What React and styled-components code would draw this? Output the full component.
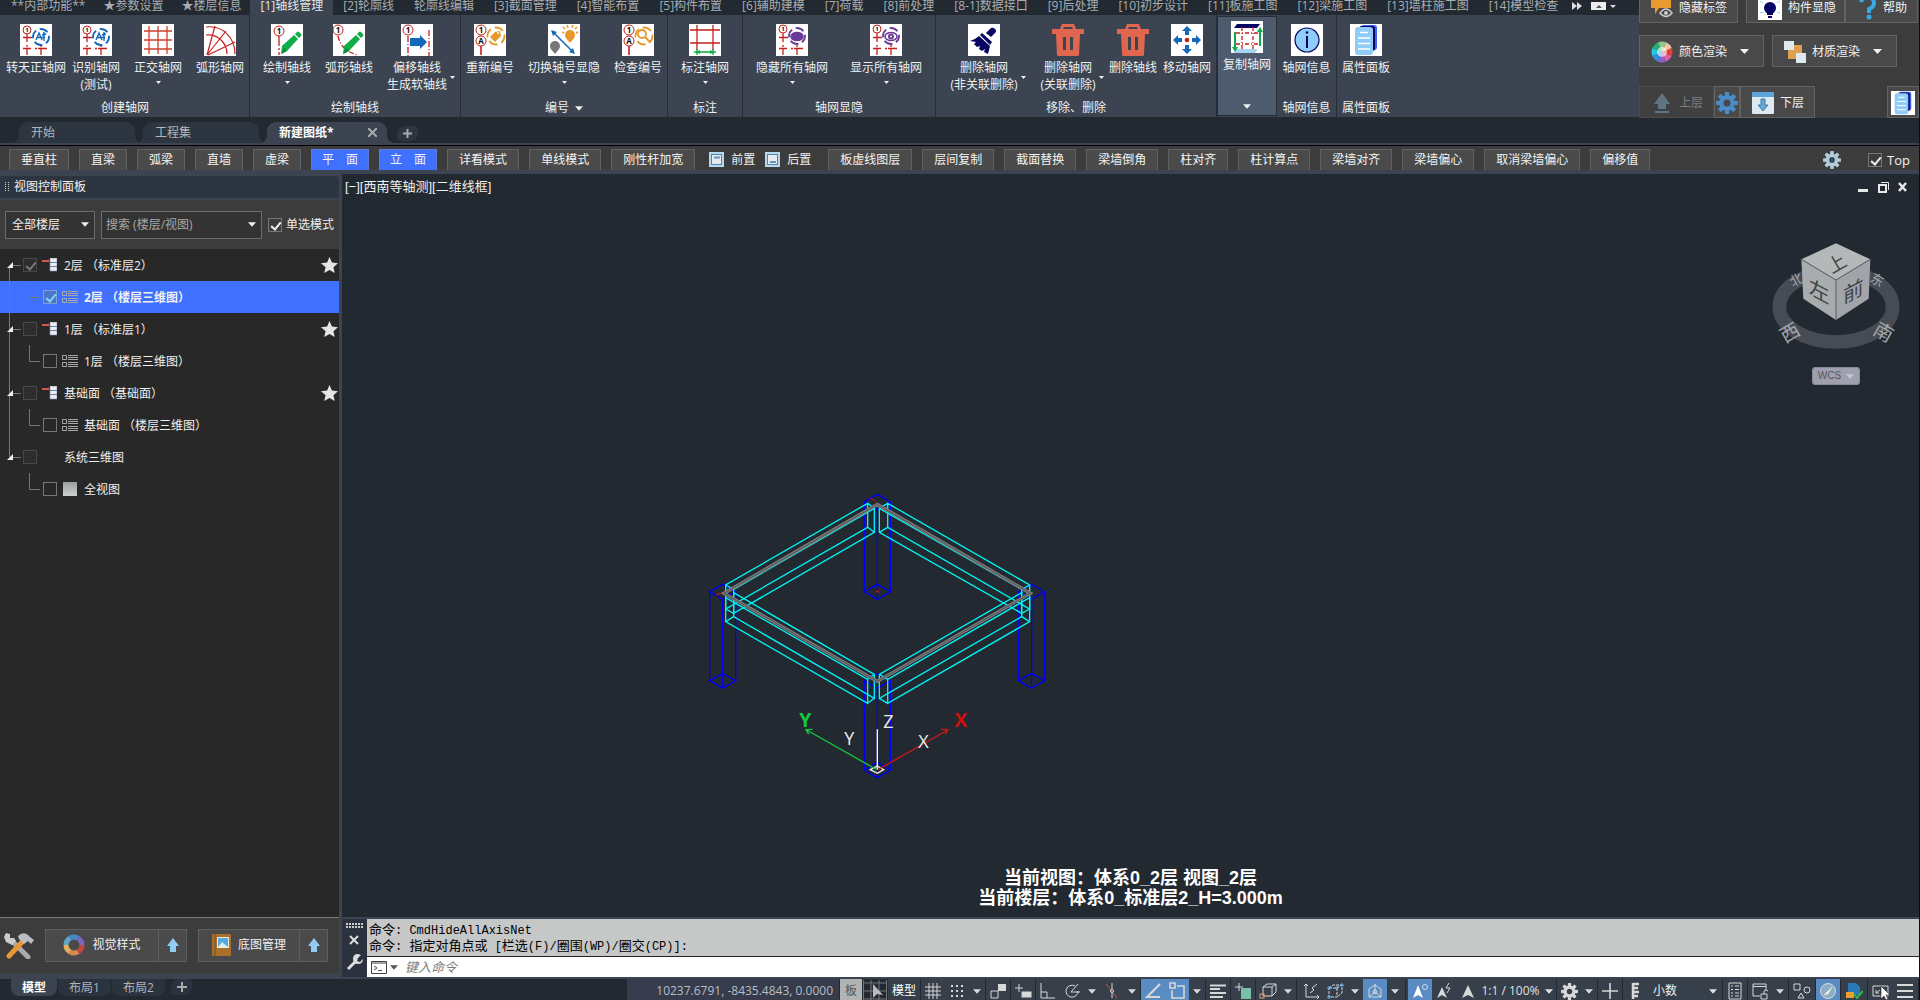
import React, { useState } from 'react';
import styled, { createGlobalStyle, css } from 'styled-components';

const BLUE = '#4070ff'
const RIBBON = '#3b4450'
const DARK = '#222931'
const GREY = '#3c3c3c'

const RED = '#c4201c'
const ORANGE = '#e8982a'
const AZURE = '#1468b8'
const PURPLE = '#6a3a98'
const GREEN = '#10ac48'
const NAVY = '#040462'

/* ---------- ribbon icons, 32 x 32 ---------- */

const Bubble = ({ x, y, r = 5, t = '1', size = 8 }) => (
    <g>
        <circle cx={x} cy={y} r={r} fill="#fff" stroke={RED} strokeWidth="1" />
        <text x={x} y={y + size * 0.36} fontSize={size} fontWeight="700" textAnchor="middle" fill="#111">{t}</text>
    </g>
)

const AxisCross = () => (
    <g stroke={RED} strokeWidth="1.3" fill="none">
        <path d="M7 9v9M3 13.5h9M7 21v2M7 25v6M3 24.5h8M15 24.5h2M18 24.5h9M21 21v2M21 25v6" />
    </g>
)

const Brackets = ({ cx, cy, r, color }) => (
    <circle cx={cx} cy={cy} r={r} fill="none" stroke={color} strokeWidth="1.8"
        strokeDasharray={`${r * 1.1} ${r * 0.47}`} strokeDashoffset={r * 0.2} />
)

const TakeAxis = () => (
    <g>
        <AxisCross />
        <Bubble x={7} y={6} r={4} size={6} />
        <Brackets cx={21} cy={13} r={8} color={AZURE} />
        <path d="M16 16l3-7 3 7M17 13.5h8M24 8v9M22 11l4-1" stroke={AZURE} strokeWidth="1.4" fill="none" />
    </g>
)

const HideAxis = ({ open }) => (
    <g>
        <AxisCross />
        <Bubble x={7} y={5} r={4} size={6} />
        <Brackets cx={21} cy={12} r={8} color={PURPLE} />
        <ellipse cx="21" cy="12.5" rx="6" ry="4" fill={open ? '#fff' : PURPLE} stroke={PURPLE} strokeWidth="1.5" />
        {open && <circle cx="21" cy="12.5" r="2" fill="#fff" stroke={PURPLE} strokeWidth="2" />}
    </g>
)

const GridAxis = () => (
    <path d="M7 2v28M16 2v28M25 2v28M2 7h28M2 16h28M2 25h28" stroke="#d0422c" strokeWidth="1.3" />
)

const ArcAxis = () => (
    <g fill="none" stroke={RED} strokeWidth="1.2">
        <path d="M2 3C18 1 31 13 31 30M2 11C14 10 23 19 23 30M3 31L11 2M3 31L22 7M4 31L31 18" />
    </g>
)

const Pencil = () => (
    <g>
        <path d="M11 22l12-11 4 4-11 12-6 3z" fill={GREEN} />
        <path d="M24 10l2-2q1-1 2 0l2 2q1 1 0 2l-2 2z" fill={GREEN} />
        <path d="M13 24l3 3-6 3z" fill="#0a8a38" />
    </g>
)

const DrawAxis = () => (
    <g>
        <path d="M8 12v10M8 24v2M8 28v3" stroke={RED} strokeWidth="1.3" />
        <Bubble x={8} y={7} r={5} />
        <Pencil />
    </g>
)

const DrawArc = () => (
    <g>
        <path d="M5 12q3 15 20 19" fill="none" stroke={RED} strokeWidth="1.3" strokeDasharray="5 2 1 2" />
        <Bubble x={5} y={6} r={5} />
        <Pencil />
    </g>
)

const OffsetAxis = () => (
    <g>
        <path d="M7 12v20M28 6v26" stroke={RED} strokeWidth="1.3" strokeDasharray="6 2 1 2" />
        <Bubble x={7} y={6} r={5} />
        <path d="M9 14h10v-3l7 7-7 7v-3H9z" fill={AZURE} />
    </g>
)

const Renumber = ({ search }) => (
    <g>
        <path d="M7 22v9" stroke={RED} strokeWidth="1.6" />
        <Bubble x={7} y={6} r={5} />
        <Bubble x={7} y={17} r={5} t="A" />
        <Brackets cx={22} cy={12} r={8.5} color={ORANGE} />
        {search
            ? <g fill="none" stroke={ORANGE} strokeWidth="1.8"><circle cx="20" cy="10" r="4" /><path d="M23 13l5 5" /></g>
            : <g><path d="M16 13l5-5 5-1 1 5-6 6z" fill={ORANGE} /><circle cx="24" cy="9" r="1" fill="#fff" /></g>}
    </g>
)

const ToggleNumber = () => (
    <g>
        <path d="M5 8l20 20" stroke={AZURE} strokeWidth="1.6" />
        <path d="M3 6l6 2-4 4zM27 30l-6-2 4-4z" fill={AZURE} />
        <circle cx="22" cy="11" r="5" fill={ORANGE} />
        <path d="M18 14h8l-4 5z" fill={ORANGE} />
        <path d="M14 8l2 1M15 3l2 2M19 1l1 3M25 1l-1 3M29 3l-2 2M30 8l-2 1" stroke={ORANGE} strokeWidth="1.5" />
        <circle cx="7" cy="22" r="5" fill="#777" />
        <path d="M3 25h8l-4 5z" fill="#777" />
    </g>
)

const MarkAxis = () => (
    <g>
        <path d="M8 1v25M24 1v25M1 6h30M1 19h30" stroke={RED} strokeWidth="1.3" />
        <path d="M5 28h22M8 25v6M24 25v6" stroke={GREEN} strokeWidth="1.4" />
        <path d="M7 28l4-2v4zM25 28l-4-2v4z" fill={GREEN} />
    </g>
)

const Broom = () => (
    <g fill={NAVY}>
        <path d="M18 9l5-5q2-1 4 1t0 4l-4 4z" />
        <path d="M14 9l10 9-2 3L12 11z" />
        <path d="M11 12l11 10-2 8-4-2 1-3-3 2-3-2 1-3-3 1-3-3 2-2-6-1q6-2 9-5z" />
    </g>
)

const Trash = () => (
    <g fill="#e06650">
        <path d="M10 0h12l2 5h8v5H0V5h8zM12 3l-1 2h10l-1-2z" fillRule="evenodd" />
        <path d="M4 10h24l-1 21q0 1-2 1H7q-2 0-2-1zM11 13v13h3V13zM18 13v13h3V13z" fillRule="evenodd" />
    </g>
)

const MoveAxis = () => (
    <g fill={AZURE}>
        <path d="M16 2l5 5h-3v4h-4V7h-3zM16 30l5-5h-3v-4h-4v4h-3zM2 16l5-5v3h4v4H7v3zM30 16l-5-5v3h-4v4h4v3z" />
        <circle cx="16" cy="16" r="2.3" fill={RED} />
    </g>
)

const CopyAxis = () => (
    <g>
        <path d="M6 3h23l-3 4H3z" fill={NAVY} />
        <path d="M6 28h21l-3 4H2z" fill="#a8d4f4" />
        <path d="M11 6v22M22 6v22M5 12h22M5 23h22" stroke={RED} strokeWidth="1.3" strokeDasharray="4 2 1 2" />
        <path d="M3 11h2v15h2l-3 5-3-5h2zM28 25h2V11h2l-3-5-3 5h2z" fill={GREEN} />
    </g>
)

const Info = () => (
    <g>
        <circle cx="16" cy="16" r="12" fill="#90ccf8" stroke={NAVY} strokeWidth="1.2" />
        <path d="M16 12v12" stroke={NAVY} strokeWidth="2" />
        <circle cx="16" cy="8.5" r="1.3" fill={NAVY} />
    </g>
)

const Sheets = () => (
    <g>
        <path d="M12 1h12q3 0 3 3v19q0 3-3 3h-2z" fill="#3c60f0" />
        <path d="M10 2h12q3 0 3 3v19q0 3-3 3z" fill={NAVY} />
        <rect x="5" y="3" width="18" height="28" rx="3" fill="#90ccf8" />
        <path d="M10 8.5h8M8 14h12M8 19.5h12M8 25h12" stroke="#fff" strokeWidth="1.3" />
    </g>
)

const Down = ({ w = 9 }) => (
    <svg width={w} height={5} viewBox="0 0 9 5"><path d="M0 0h9L4.500 5z" fill="currentColor" /></svg>
)

/* ---------- data ---------- */

const ribbonTabs = [
    '**内部功能**', '★参数设置', '★楼层信息', '[1]轴线管理', '[2]轮廓线', '轮廓线编辑', '[3]截面管理', '[4]智能布置',
    '[5]构件布置', '[6]辅助建模', '[7]荷载', '[8]前处理', '[8-1]数据接口', '[9]后处理', '[10]初步设计', '[11]板施工图',
    '[12]梁施工图', '[13]墙柱施工图', '[14]模型检查',
]

const ribbonGroups = [
    {
        title: '创建轴网',
        items: [
            { label: ['转天正轴网'], icon: <TakeAxis />, w: 66 },
            { label: ['识别轴网', '(测试)'], icon: <TakeAxis />, w: 54 },
            { label: ['正交轴网'], icon: <GridAxis />, w: 70, drop: 'under' },
            { label: ['弧形轴网'], icon: <ArcAxis />, w: 54 },
        ],
    },
    {
        title: '绘制轴线',
        items: [
            { label: ['绘制轴线'], icon: <DrawAxis />, w: 70, drop: 'under' },
            { label: ['弧形轴线'], icon: <DrawArc />, w: 54 },
            { label: ['偏移轴线', '生成软轴线'], icon: <OffsetAxis />, w: 82, drop: 'side' },
        ],
    },
    {
        title: '编号',
        more: true,
        items: [
            { label: ['重新编号'], icon: <Renumber />, w: 54 },
            { label: ['切换轴号显隐'], icon: <ToggleNumber />, w: 94, drop: 'under' },
            { label: ['检查编号'], icon: <Renumber search />, w: 54 },
        ],
    },
    { title: '标注', items: [{ label: ['标注轴网'], icon: <MarkAxis />, w: 70, drop: 'under' }] },
    {
        title: '轴网显隐',
        items: [
            { label: ['隐藏所有轴网'], icon: <HideAxis />, w: 94, drop: 'under' },
            { label: ['显示所有轴网'], icon: <HideAxis open />, w: 94, drop: 'under' },
        ],
    },
    {
        title: '移除、删除',
        items: [
            { label: ['删除轴网', '(非关联删除)'], icon: <Broom />, w: 92, drop: 'side' },
            { label: ['删除轴网', '(关联删除)'], icon: <Trash />, w: 76, drop: 'side', bare: true },
            { label: ['删除轴线'], icon: <Trash />, w: 54, bare: true },
            { label: ['移动轴网'], icon: <MoveAxis />, w: 54 },
        ],
    },
    { active: true, items: [{ label: ['复制轴网'], icon: <CopyAxis />, w: 54 }] },
    { title: '轴网信息', items: [{ label: ['轴网信息'], icon: <Info />, w: 55 }] },
    { title: '属性面板', last: true, items: [{ label: ['属性面板'], icon: <Sheets />, w: 54 }] },
]

const toolsLeft = ['垂直柱', '直梁', '弧梁', '直墙', '虚梁', '平\u3000面', '立\u3000面', '详看模式', '单线模式', '刚性杆加宽']
const toolsRight = ['板虚线图层', '层间复制', '截面替换', '梁墙倒角', '柱对齐', '柱计算点', '梁墙对齐', '梁墙偏心', '取消梁墙偏心', '偏移值']

const floors = [
    { name: '2层 （标准层2）', child: '2层 （楼层三维图）', star: true, checked: true },
    { name: '1层 （标准层1）', child: '1层 （楼层三维图）', star: true },
    { name: '基础面 （基础面）', child: '基础面 （楼层三维图）', star: true },
    { name: '系统三维图', child: '全视图' },
]

const history = [
    '命令: CmdHideAllAxisNet',
    '命令: 指定对角点或 [栏选(F)/圈围(WP)/圈交(CP)]:',
]

/* ---------- pieces ---------- */

const RibbonItem = ({ item, raised }) => (
    <BigButton $w={item.w} $raised={raised}>
        <svg width="32" height="32" viewBox="0 0 32 32">
            {!item.bare && <rect width="32" height="32" fill="#fff" />}
            {item.icon}
        </svg>
        <BigLabel>
            {item.label.map(line => <span key={line}>{line}</span>)}
            {item.drop === 'side' && <SideArrow><Down w={5} /></SideArrow>}
        </BigLabel>
        {item.drop === 'under' && <Down w={5} />}
    </BigButton>
)

const Ribbon = () => (
    <RibbonBody>
        {ribbonGroups.map((g, i) => (
            <Group key={i} $active={g.active} $last={g.last}>
                <GroupItems>
                    {g.items.map(item => <RibbonItem key={item.label.join()} item={item} raised={g.active} />)}
                </GroupItems>
                <GroupTitle>{g.title}{(g.more || g.active) && <Down w={8} />}</GroupTitle>
            </Group>
        ))}
    </RibbonBody>
)

const Gear = ({ size, color, hole }) => (
    <svg width={size} height={size} viewBox="0 0 20 20">
        <g fill={color}>
            {[0, 45, 90, 135].map(a => <rect key={a} x="8" y="0" width="4" height="20" rx="1" transform={`rotate(${a} 10 10)`} />)}
            <circle cx="10" cy="10" r="7" />
        </g>
        <circle cx="10" cy="10" r="3.2" fill={hole} />
    </svg>
)

const RightPanel = () => (
    <SidePanel>
        <SideRow>
            <PanelButton $w={99}>
                <svg width="22" height="24" viewBox="0 0 22 24">
                    <path d="M0 0h20v12H8l-4 6v-6H0z" fill="#e89a30" />
                    <path d="M9 17q6-8 12 0-6 7-12 0z" fill="#484848" stroke="#ccc" strokeWidth="1.5" />
                    <circle cx="15" cy="17" r="2" fill="#ccc" />
                </svg>
                隐藏标签
            </PanelButton>
            <Spacer />
            <PanelButton $w={99}>
                <svg width="24" height="24" viewBox="0 0 24 24">
                    <rect width="24" height="24" fill="#fff" />
                    <circle cx="12" cy="12" r="6" fill={NAVY} />
                    <path d="M9 17h6v2H9zM10 20h4v2h-4z" fill={NAVY} />
                    <path d="M2 5l3 2M22 5l-3 2M2 17l3-1M22 17l-3-1" stroke="#8cc8f0" />
                </svg>
                构件显隐
            </PanelButton>
            <PanelButton $w={73}>
                <svg width="20" height="24" viewBox="0 0 20 24">
                    <path d="M4 6q1-5 7-5 6 1 6 6 0 4-5 6v4" fill="none" stroke="#38a8e8" strokeWidth="4" />
                    <circle cx="12" cy="21" r="2.5" fill="#38a8e8" />
                </svg>
                帮助
            </PanelButton>
        </SideRow>
        <SideRow>
            <PanelButton $w={125}>
                <ColorWheel />
                颜色渲染
                <Down />
            </PanelButton>
            <Spacer />
            <PanelButton $w={125}>
                <svg width="22" height="22" viewBox="0 0 22 22">
                    <rect x="4" y="4" width="14" height="14" fill="#e0a050" />
                    <rect x="0" y="0" width="10" height="9" fill="#dfe8ee" />
                    <rect x="12" y="12" width="10" height="10" fill="#dfe8ee" />
                </svg>
                材质渲染
                <Down />
            </PanelButton>
        </SideRow>
        <SideRow $last>
            <PanelButton $w={75} disabled>
                <svg width="22" height="24" viewBox="0 0 22 24"><path d="M11 2l8 11h-4v5H7v-5H3zM4 20h14v2H4z" fill="#5f7584" /></svg>
                上层
            </PanelButton>
            <PanelButton $w={26} $tight aria-label="设置"><Gear size={22} color="#4a8cc8" hole="#484848" /></PanelButton>
            <PanelButton $w={75}>
                <svg width="22" height="22" viewBox="0 0 22 22">
                    <rect width="22" height="22" rx="1" fill="#dfe9f0" />
                    <rect width="22" height="5" fill="#5aa4dc" />
                    <path d="M9 7h4v6h3l-5 6-5-6h3z" fill="#6aa8d4" stroke="#3c7cac" />
                </svg>
                下层
            </PanelButton>
            <Fill />
            <PanelButton $w={32} $tight aria-label="属性面板">
                <svg width="24" height="24" viewBox="0 0 32 32"><rect width="32" height="32" fill="#fff" /><Sheets /></svg>
            </PanelButton>
        </SideRow>
    </SidePanel>
)

const ColorWheel = () => (
    <svg width="22" height="22" viewBox="-11 -11 22 22">
        {['#e83c30', '#e060a0', '#9060d0', '#3090e0', '#20c8e0', '#20b070', '#90c890', '#f0c8a0'].map((c, i) => (
            <path key={c} d="M0 0L10.500 0A10.500 10.500 0 0 1 7.400 7.400z" fill={c} transform={`rotate(${i * 45 - 22})`} />
        ))}
        <circle r="5" fill="#fff" opacity=".6" />
    </svg>
)

const WindowIcon = ({ low }) => (
    <svg width="15" height="15" viewBox="0 0 15 15">
        <rect width="15" height="15" fill="#b8d8ec" />
        <rect x="2.5" y="2.5" width="10" height="10" fill="#e8eaf0" stroke="#4c88b4" />
        <path d={low ? 'M5 10h6' : 'M5 5.5h6'} stroke="#5c98c4" strokeWidth="2" />
    </svg>
)

const Toolbar = () => (
    <ToolRow>
        {toolsLeft.map((t, i) => <ToolButton key={t} $on={i === 5 || i === 6}>{t}</ToolButton>)}
        <OrderButtons>
            <FlatButton><WindowIcon />前置</FlatButton>
            <FlatButton><WindowIcon low />后置</FlatButton>
        </OrderButtons>
        {toolsRight.map(t => <ToolButton key={t}>{t}</ToolButton>)}
        <Fill />
        <FlatButton aria-label="选项"><Gear size={18} color="#b4cbdc" hole="#3c4c5a" /></FlatButton>
        <TopCheck><CheckBox type="checkbox" defaultChecked />Top</TopCheck>
    </ToolRow>
)

const FloorIcon = () => (
    <svg width="15" height="14" viewBox="0 0 15 14">
        <path d="M0 3h7" stroke="#d85848" strokeWidth="2" />
        <rect x="8" y="0" width="7" height="13" fill="#e8ecf4" stroke="#8890b8" strokeWidth=".6" />
        <path d="M8 4.500h7M8 8.500h7" stroke="#7a80a0" />
    </svg>
)

const ListIcon = () => (
    <svg width="16" height="12" viewBox="0 0 16 12" fill="none" stroke="#a8a8a8">
        <path d="M.5.5h4v4h-4zM.5 7.500h4v4h-4zM6 .5h10M6 2.500h10M6 4.500h10M6 7.500h10M6 9.500h10M6 11.500h10" />
    </svg>
)

const FloorTree = () => {
    const [active, setActive] = useState(0)
    return (
        <Tree>
            {floors.map((f, i) => (
                <React.Fragment key={f.name}>
                    <TreeRow $kind="parent" $first={i === 0} $last={i === floors.length - 1}>
                        <Twist width="14" height="7" viewBox="0 0 14 7"><path d="M0 6L6 0v6z" fill="#eee" /><path d="M6 3.500h8" stroke="#777" /></Twist>
                        <CheckBox type="checkbox" $dim defaultChecked={f.checked} aria-label={f.name} />
                        <IconSlot>{f.star && <FloorIcon />}</IconSlot>
                        <TreeText>{f.name}</TreeText>
                        <Fill />
                        {f.star && (
                            <svg width="17" height="16" viewBox="0 0 17 16">
                                <path d="M8.500 0l2.400 5.600 6.100.6-4.600 4 1.400 5.800-5.300-3.100L3.200 16l1.400-5.800L0 6.200l6.100-.6z" fill="#e6e6e6" />
                            </svg>
                        )}
                    </TreeRow>
                    <TreeRow $kind="child" $on={active === i} $end={i === floors.length - 1} onClick={() => setActive(i)}>
                        <Branch width="11" height="17" viewBox="0 0 11 17"><path d="M.5 0v16.500H11" fill="none" stroke="#777" /></Branch>
                        <CheckBox type="checkbox" $sel={active === i} checked={active === i} readOnly aria-label={f.child} />
                        <IconSlot>{f.star ? <ListIcon /> : <ViewSwatch />}</IconSlot>
                        <TreeText>{f.child}</TreeText>
                    </TreeRow>
                </React.Fragment>
            ))}
        </Tree>
    )
}

const UpArrow = () => (
    <svg width="12" height="14" viewBox="0 0 12 14"><path d="M6 0l6 8H9v6H3V8H0z" fill="#90ccf4" /></svg>
)

const FloorPanel = () => (
    <LeftPanel>
        <PanelTitle>
            <svg width="4" height="10" viewBox="0 0 4 10"><path d="M.5 0v10M3.500 0v10" stroke="#ccc" strokeDasharray="1 1" /></svg>
            视图控制面板
        </PanelTitle>
        <Filters>
            <SelectBox $w={90}>
                <select aria-label="楼层"><option>全部楼层</option></select>
                <Down w={8} />
            </SelectBox>
            <SelectBox $grow>
                <input aria-label="搜索" placeholder="搜索 (楼层/视图)" />
                <Down w={8} />
            </SelectBox>
            <CheckLabel><CheckBox type="checkbox" defaultChecked />单选模式</CheckLabel>
        </Filters>
        <FloorTree />
        <PanelFoot>
            <FlatButton aria-label="工具">
                <svg width="30" height="28" viewBox="0 0 30 28">
                    <path d="M9 11l15 15" stroke="#aaa" strokeWidth="5" strokeLinecap="round" />
                    <path d="M2 2l4 1v4h4l2 3-4 4-6-3-2-5z" fill="#ccc" />
                    <path d="M20 9L5 25" stroke="#e89838" strokeWidth="5" strokeLinecap="round" />
                    <path d="M14 5q6-6 12 1l4 3-3 4-3-3-4 3-5-5z" fill="#b8bec2" />
                </svg>
            </FlatButton>
            <SplitButton $w={142}>
                <button>
                    <svg width="22" height="22" viewBox="-11 -11 22 22" fill="none" strokeWidth="5">
                        {['#c84840', '#d88850', '#e0b060', '#60a8c8', '#4888d0', '#7868c0'].map((c, i) => (
                            <path key={c} d="M8 0A8 8 0 0 1 4 6.900" stroke={c} transform={`rotate(${i * 60})`} />
                        ))}
                    </svg>
                    视觉样式
                </button>
                <button aria-label="展开视觉样式"><UpArrow /></button>
            </SplitButton>
            <SplitButton $w={130}>
                <button>
                    <svg width="19" height="22" viewBox="0 0 19 22">
                        <rect width="19" height="22" rx="1" fill="#a8702c" />
                        <path d="M3 0v22" stroke="#7c5020" />
                        <rect x="5" y="3" width="12" height="11" fill="#e8ecdc" />
                        <path d="M6 4h10v9H6z" fill="#58a8d8" />
                        <path d="M6 13l4-5 6 5z" fill="#d8ecf4" />
                    </svg>
                    底图管理
                </button>
                <button aria-label="展开底图管理"><UpArrow /></button>
            </SplitButton>
        </PanelFoot>
    </LeftPanel>
)

const columns = [
    [562, 73, 343], [98, 343, 610], [1025, 343, 610], [562, 610, 878],
]

const Wireframe = () => (
    <Model width="370" height="320" viewBox="0 0 1110 960" fill="none" strokeWidth="4">
        <g stroke="#0000f8">
            {columns.map(([x, t, b]) => (
                <path key={x + '-' + t} d={`M${x} ${t}l39 22-39 23-39-23zM${x} ${b}l39 22-39 23-39-23zM${x - 39} ${t + 22}V${b + 22}M${x + 39} ${t + 22}V${b + 22}M${x} ${t + 45}V${b + 45}`} />
            ))}
        </g>
        <g stroke="#00f4f4">
            <path d="M533 100L107 345V417L533 172zM553 115L131 358V430L553 187zM533 100l20 15M533 172l20 15M107 345l24 13M107 417l24 13" />
            <path d="M593 100L1019 345V417L593 172zM568 115L995 358V430L568 187zM593 100l-25 15M593 172l-25 15M1019 345l-24 13M1019 417l-24 13" />
            <path d="M131 368L553 613V685L131 440zM107 383L533 628V700L107 455zM131 440l-24 15M553 613l-20 15M553 685l-20 15" />
            <path d="M995 368L568 613V685L995 440zM1019 383L593 628V700L1019 455zM995 440l24 15M568 613l25 15M568 685l25 15" />
        </g>
        <path d="M562 103L1021 370 562 634 102 370z" stroke="#7c7c7c" strokeWidth="10" />
        <path d="M562 103L1021 370 562 634 102 370z" stroke="#3a4046" strokeWidth="2" />
        <path d="M541 84l15 9M80 376l14-8M80 376l7-8M557 362l11 5M568 362l-11 5" stroke="#c01818" strokeWidth="3" />
        <path d="M541 899l21-11 19 11-19 11z" stroke="#eee" />
        <path d="M562 900V778" stroke="#fff" />
        <path d="M562 900L350 780M368 778l-20 1 8 14" stroke="#14c83c" />
        <path d="M562 900L773 780M753 778l20 1-7 14" stroke="#d01818" />
        <text x="346" y="771" textAnchor="middle" fontSize="58" fontWeight="700" fill="#14c83c">Y</text>
        <text x="813" y="771" textAnchor="middle" fontSize="58" fontWeight="700" fill="#d01010">X</text>
        <text x="478" y="824" textAnchor="middle" fontSize="54" fill="#eee">Y</text>
        <text x="595" y="773" textAnchor="middle" fontSize="54" fill="#eee">Z</text>
        <text x="700" y="834" textAnchor="middle" fontSize="54" fill="#eee">X</text>
    </Model>
)

const ViewCube = () => (
    <CubeBox>
        <svg width="130" height="110" viewBox="93 210 390 330">
            <ellipse cx="288" cy="410" rx="170" ry="106" fill="none" stroke="#464b54" strokeWidth="41" />
            <g fontSize="40" fill="#a4a8aa" textAnchor="middle">
                <text transform="translate(176 342) rotate(-30)">北</text>
                <text transform="translate(404 342) rotate(30)">东</text>
                <text transform="translate(160 506) rotate(-30)" fontSize="58">西</text>
                <text transform="translate(420 504) rotate(30)" fontSize="58">南</text>
            </g>
            <path d="M288 220L391 268 288 330 184 268z" fill="#b4b8b9" />
            <path d="M184 268L288 330V450L190 386z" fill="#a9acae" />
            <path d="M391 268L288 330V450L386 386z" fill="#a2a4aa" />
            <path d="M184 268L288 330 391 268M288 330V450" stroke="#585c5e" strokeWidth="3" fill="none" />
            <g fontSize="62" fill="#3f4645" textAnchor="middle">
                <text transform="translate(300 298) rotate(-30)" fontSize="56">上</text>
                <text transform="translate(237 386) skewY(28)">左</text>
                <text transform="translate(340 386) skewY(-28)">前</text>
            </g>
        </svg>
        <Wcs>WCS<Down w={8} /></Wcs>
    </CubeBox>
)

// hanzi run one size larger than the monospaced latin
const HistoryLine = ({ text }) => (
    <div>
        {text.split(/([\u4e00-\u9fff]+)/).map((part, i) => i % 2 ? <Han key={i}>{part}</Han> : part)}
    </div>
)

const CommandLine = () => (
    <Command>
        <CommandGutter>
            <svg width="18" height="56" viewBox="0 0 18 56" fill="none">
                <path d="M0 5h18M0 8h18" stroke="#ccc" strokeWidth="2" strokeDasharray="2 1" />
                <path d="M4 17l8 8M12 17l-8 8" stroke="#ddd" strokeWidth="2" />
                <path d="M2 50l8-8" stroke="#ddd" strokeWidth="3" />
                <path d="M15 36l-3 3-1 3 3 1 3-3q0 5-5 5t-5-5 5-5z" fill="#ddd" />
            </svg>
        </CommandGutter>
        <CommandBody>
            <History>
                {history.map(line => <HistoryLine key={line} text={line} />)}
            </History>
            <Prompt>
                <svg width="16" height="13" viewBox="0 0 16 13" fill="none" stroke="#444">
                    <path d="M.5.5h15v12H.5zM0 2h16M3 5l3 2-3 2M7 9.500h4" />
                </svg>
                <Down w={8} />
                <input aria-label="命令" placeholder="键入命令" />
            </Prompt>
        </CommandBody>
    </Command>
)

/* status bar glyphs on an 18px grid */
const status = {
    grid: <path d="M5 1v16M9 1v16M13 1v16M1 5h16M1 9h16M1 13h16" />,
    dots: <path d="M3 4h12M3 9h12M3 14h12" strokeWidth="2" strokeDasharray="2 3" />,
    snap: <><rect x="9" y="2" width="8" height="7" fill="#d8d8d8" stroke="none" /><path d="M9 9H2v7h7z" /></>,
    input: <><path d="M1 6h8M5 2v8" /><rect x="8" y="10" width="9" height="5" fill="#d8d8d8" /></>,
    ortho: <path d="M2 1v15h14M2 10h6v6" />,
    polar: <path d="M15 9a6 6 0 1 1-3-5M8 10h9M8 10l7-8" />,
    iso: <><path d="M3 2l11 14" stroke="#c85850" /><path d="M9 1v6M9 11v5" /><circle cx="9" cy="9" r="1.5" /></>,
    track: <path d="M16 2L3 15h13M9 9l1 1" strokeWidth="2" />,
    osnap: <path d="M4 8v8h12V4H9M2 1h5v5H2z" strokeWidth="1.6" />,
    weight: <path d="M1 3.500h16M1 7h10M1 11h16M1 15h13" strokeWidth="2" />,
    trans: <><path d="M1 5h8M5 1v8" /><rect x="7" y="6" width="10" height="11" fill="#78c0a8" stroke="none" /></>,
    solid: <><path d="M4 5h9v9H4zM4 5l4-3h9l-4 3M17 2v8l-4 4" /><rect x="1" y="12" width="4" height="4" stroke="#e0a070" /></>,
    ucs: <path d="M4 2v13h13M2 4l2-2 2 2M15 13l2 2-2 2M8 11l4-3-2-2 5-4" />,
    filter: <><path d="M3 6h8v9H3zM3 6l4-3h9v8l-5 4M11 6l4-3" strokeDasharray="3 1" /><path d="M2 5h2v2H2zM10 5h2v2h-2zM2 14h2v2H2zM15 2h2v2h-2z" stroke="#60b0e8" /></>,
    gizmo: <><path d="M9 2v8M9 10l-6 5M9 10l6 5M9 3L3 7v8M9 3l6 4v8M3 15h12" /><circle cx="9" cy="10" r="2" /></>,
    scaleA: <><path d="M7 3L2 16l5-3 5 3z" fill="#fff" stroke="none" /><circle cx="14" cy="5" r="2.5" /></>,
    scaleB: <><path d="M7 5L2 16l5-3 5 3z" fill="#d8d8d8" stroke="none" /><path d="M14 1l-3 5h4l-3 5" /></>,
    scaleC: <path d="M9 3L3 16l6-3 6 3z" fill="#d8d8d8" stroke="none" />,
    plus: <path d="M9 1v16M1 9h16" strokeWidth="1.6" />,
    ruler: <path d="M6 1v16M6 2h6M6 6h5M6 10h6M6 14h5" strokeWidth="2.5" />,
    props: <path d="M3 1h12v16H3zM5 4h2M9 4h4M5 7.500h2M9 7.500h4M5 11h2M9 11h4M5 14h2M9 14h4" />,
    lock: <><path d="M15 8V2H2v12h7M2 4.500h13" /><path d="M10 12h6v5h-6zM13 12V9q2-2 4 0" /></>,
    shapes: <><path d="M1 2h6v6H1zM8 11l-3 5h6z" /><circle cx="14" cy="8" r="3" /></>,
    perf: <><circle cx="9" cy="9" r="7.5" fill="#8ab0c8" /><path d="M5 13l8-8-4 7z" fill="#fff" /></>,
    trust: <><path d="M3 1h8l4 4v8H3z" fill="#2878b8" stroke="none" /><rect x="1" y="10" width="8" height="6" fill="#e8a030" stroke="none" /><path d="M9 12l3 4 6-7" stroke="#30b850" strokeWidth="2" /></>,
    clean: <><path d="M1 4h15v10H1zM4 11l4-3M4 8v3h3" /><path d="M9 4v13l3-3 2 4 2-1-2-4h4z" fill="#fff" stroke="#222" strokeWidth=".6" /></>,
    menu: <path d="M1 3h16M1 9h16M1 15h16" strokeWidth="2" />,
}

const St = ({ n, on }) => (
    <StatusButton $on={on} aria-label={n}>
        <svg width="18" height="18" viewBox="0 0 18 18" fill="none" stroke="#d8d8d8">{status[n]}</svg>
    </StatusButton>
)

const More = () => <StatusMore aria-label="更多"><Down w={8} /></StatusMore>

const StatusBar = () => (
    <BottomBar>
        <LayoutTab $on>模型</LayoutTab>
        <LayoutTab>布局1</LayoutTab>
        <LayoutTab>布局2</LayoutTab>
        <AddLayout aria-label="新建布局">
            <svg width="10" height="10" viewBox="0 0 10 10"><path d="M5 0v10M0 5h10" stroke="#aaa" strokeWidth="2" /></svg>
        </AddLayout>
        <Fill />
        <Coords>10237.6791, -8435.4843, 0.0000</Coords>
        <Slab>板</Slab>
        <StatusButton aria-label="选择">
            <svg width="24" height="22" viewBox="0 0 24 22"><path d="M.5 0v22M8 0v22M16 0v22M23.500 0v22M0 3h24M0 11h24M0 19h24" stroke="#777" /><path d="M10 4v14l4-4 6 1z" fill="#bbb" /></svg>
        </StatusButton>
        <ModelButton>模型</ModelButton>
        <Cluster><St n="grid" /><St n="dots" /><More /></Cluster>
        <Cluster><St n="snap" /></Cluster>
        <Cluster><St n="input" /></Cluster>
        <Cluster><St n="ortho" /><St n="polar" /><More /><St n="iso" /><More /></Cluster>
        <Cluster><St n="track" on /><St n="osnap" on /><More /></Cluster>
        <Cluster><St n="weight" /></Cluster>
        <Cluster><St n="trans" /></Cluster>
        <Cluster><St n="solid" /><More /></Cluster>
        <Cluster $pad={2}><St n="ucs" /><St n="filter" /><More /><St n="gizmo" on /><More /></Cluster>
        <Cluster $pad={2}><St n="scaleA" on /><St n="scaleB" /><St n="scaleC" /><ScaleText>1:1 / 100%<Down w={8} /></ScaleText></Cluster>
        <Cluster><StatusButton aria-label="工作空间"><Gear size={17} color="#d8d8d8" hole="#363f4a" /></StatusButton><More /></Cluster>
        <Cluster><St n="plus" /></Cluster>
        <Cluster $pad={1}>
            <St n="ruler" />
            <UnitSelect>
                <select aria-label="单位"><option>小数</option></select>
                <Down w={8} />
            </UnitSelect>
        </Cluster>
        <Cluster><St n="props" /></Cluster>
        <Cluster><St n="lock" /><More /></Cluster>
        <Cluster $pad={1}><St n="shapes" /></Cluster>
        <Cluster><St n="perf" on /></Cluster>
        <Cluster $pad={1}><St n="trust" /></Cluster>
        <Cluster $pad={1}><St n="clean" /><St n="menu" /></Cluster>
    </BottomBar>
)

export default function App() {
    return (
        <Page>
            <Global />
            <TopArea>
                <RibbonArea>
                    <RibbonTabs>
                        {ribbonTabs.map((t, i) => <RibbonTab key={t} $on={i === 3} $slim={i < 3}>{t}</RibbonTab>)}
                        <TabExtras width="46" height="15" viewBox="0 0 46 15">
                            <path d="M0 2l5 4-5 4zM5 2l5 4-5 4z" fill="#ddd" />
                            <rect x="19" y="2" width="15" height="8" fill="#eee" />
                            <path d="M24 8l3-3 3 3z" fill="#555" />
                            <path d="M38 5h6l-3 3z" fill="#ddd" />
                        </TabExtras>
                    </RibbonTabs>
                    <Ribbon />
                </RibbonArea>
                <RightPanel />
            </TopArea>
            <DocTabs>
                <DocTab>开始</DocTab>
                <DocTab>工程集</DocTab>
                <DocTab $on>
                    新建图纸*
                    <svg width="9" height="9" viewBox="0 0 9 9"><path d="M0 0l9 9M9 0L0 9" stroke="#aaa" strokeWidth="2" /></svg>
                </DocTab>
                <AddDoc aria-label="新建">
                    <svg width="9" height="9" viewBox="0 0 9 9"><path d="M4.500 0v9M0 4.500h9" stroke="#aaa" strokeWidth="2" /></svg>
                </AddDoc>
            </DocTabs>
            <Toolbar />
            <Main>
                <FloorPanel />
                <Work>
                    <Viewport>
                        <ViewHeader>
                            <span>[−][西南等轴测][二维线框]</span>
                            <svg width="50" height="12" viewBox="0 0 50 12" fill="none" stroke="#e8e8e8">
                                <path d="M0 9.500h10" strokeWidth="3" />
                                <path d="M21 4h7v7h-7z" strokeWidth="2" />
                                <path d="M23 1.500h7.500V9" />
                                <path d="M41 2l7 8M48 2l-7 8" strokeWidth="2.5" />
                            </svg>
                        </ViewHeader>
                        <Wireframe />
                        <ViewCube />
                        <ViewInfo>
                            <div>当前视图：体系0_2层 视图_2层</div>
                            <div>当前楼层：体系0_标准层2_H=3.000m</div>
                        </ViewInfo>
                    </Viewport>
                    <CommandLine />
                </Work>
            </Main>
            <StatusBar />
        </Page>
    )
}

/* ---------- styles ---------- */

const Global = createGlobalStyle`
    * { box-sizing: border-box; }
    body {
        margin: 0;
        background: ${DARK};
        overflow: hidden;
    }
    body, button, input, select {
        font-family: "Open Sans", "Noto Sans CJK SC", sans-serif;
        font-size: 12px;
        line-height: 16px;
        color: #f0f0f0;
    }
    button {
        padding: 0;
        border: 0;
        background: none;
        white-space: nowrap;
    }
    svg { display: block; flex: none; }
`
const Page = styled.div`
    display: flex;
    flex-direction: column;
    height: 100vh;
    background: ${DARK};
    border-right: 1px solid #0c0e10;
    overflow: hidden;
`
const Fill = styled.div`
    flex: 1;
`
const TopArea = styled.div`
    display: flex;
    flex: none;
    height: 118px;
`
const RibbonArea = styled.div`
    display: flex;
    flex: 1;
    flex-direction: column;
    min-width: 0;
    padding-bottom: 1px;
    overflow: hidden;
`
const RibbonTabs = styled.div`
    display: flex;
    height: 15px;
    padding-left: 2px;
    align-items: flex-end;
    overflow: hidden;
`
const RibbonTab = styled.button`
    flex: none;
    height: 19px;
    padding: 0 ${p => p.$slim ? 9 : 10}px;
    line-height: 19px;
    color: ${p => p.$on ? '#e4e6e8' : '#a9adb2'};
    background: ${p => p.$on ? RIBBON : 'transparent'};
`
const TabExtras = styled.svg`
    margin-left: 4px;
`
const RibbonBody = styled.div`
    display: flex;
    flex: 1;
    padding-left: 1px;
    background: ${RIBBON};
`
const Group = styled.div`
    display: flex;
    flex-direction: column;
    justify-content: space-between;
    padding: 0 2px;
    border-right: ${p => p.$last ? 0 : 1}px solid #262d36;
    ${p => p.$active && css`
        margin: 1px 0;
        border: 1px solid #262d36;
        background: #4e5a6d;
    `}
`
const GroupItems = styled.div`
    display: flex;
    align-items: flex-start;
`
const GroupTitle = styled.div`
    display: flex;
    height: 20px;
    padding-top: 2px;
    gap: 6px;
    justify-content: center;
    align-items: center;
`
const BigButton = styled.button`
    display: flex;
    width: ${p => p.$w}px;
    padding-top: ${p => p.$raised ? 4 : 9}px;
    flex-direction: column;
    align-items: center;
    color: #eef0f2;
`
const BigLabel = styled.span`
    display: flex;
    position: relative;
    margin-top: 3px;
    margin-bottom: 4px;
    flex-direction: column;
    align-items: center;
    line-height: 17px;
`
const SideArrow = styled.span`
    position: absolute;
    right: -8px;
    top: 16px;
`
const SidePanel = styled.div`
    display: flex;
    width: 280px;
    flex-direction: column;
    justify-content: flex-end;
    gap: 12px;
    background: ${GREY};
    overflow: hidden;
`
const SideRow = styled.div`
    display: flex;
    flex: none;
    padding-top: ${p => p.$last ? 7 : 0}px;
`
const Spacer = styled.div`
    width: 8px;
`
const PanelButton = styled.button`
    display: flex;
    width: ${p => p.$w}px;
    height: 32px;
    padding: 1px ${p => p.$tight ? 0 : 11}px 0;
    gap: ${p => p.$tight ? 0 : 6}px;
    align-items: center;
    justify-content: ${p => p.$tight ? 'center' : 'flex-start'};
    background: #494949;
    border: 1px solid #636363;
    color: #f2f2f2;
    & > svg:last-child:not(:first-child) {
        margin-left: 7px;
    }
    &:disabled {
        background: #404040;
        border-color: #4c4c4c;
        color: #7d7d84;
    }
`
const DocTabs = styled.div`
    display: flex;
    flex: none;
    height: 27px;
    padding-left: 19px;
    align-items: flex-end;
    border-bottom: 2px solid ${RIBBON};
`
const DocTab = styled.button`
    display: flex;
    position: relative;
    width: ${p => p.$on ? 120 : 116}px;
    height: 21px;
    margin-right: 8px;
    padding: 0 10px 0 12px;
    justify-content: space-between;
    align-items: center;
    border-radius: 9px 9px 0 0;
    background: ${p => p.$on ? RIBBON : '#2d3541'};
    color: ${p => p.$on ? '#fff' : '#b4b8bc'};
    font-weight: ${p => p.$on ? 700 : 400};
    &::before, &::after {
        content: '';
        position: absolute;
        bottom: 0;
        width: 8px;
        height: 8px;
    }
    &::before {
        left: -8px;
        background: radial-gradient(circle at 0 0, transparent 8px, ${p => p.$on ? RIBBON : '#2d3541'} 8px);
    }
    &::after {
        right: -8px;
        background: radial-gradient(circle at 100% 0, transparent 8px, ${p => p.$on ? RIBBON : '#2d3541'} 8px);
    }
`
const AddDoc = styled.button`
    display: flex;
    width: 21px;
    height: 15px;
    margin: 0 0 2px 2px;
    justify-content: center;
    align-items: center;
    border-radius: 8px 4px 8px 4px;
    background: #2d3541;
`
const ToolRow = styled.div`
    display: flex;
    flex: none;
    height: 25px;
    gap: 10px;
    padding: 3px 9px 0;
    background: ${GREY};
    border-top: 1px solid #000;
    overflow: hidden;
`
const ToolButton = styled.button`
    flex: none;
    height: 24px;
    padding: 0 ${p => p.$on ? 10 : 11}px 2px;
    background: ${p => p.$on ? BLUE : '#4a4a4a'};
    border: 1px solid ${p => p.$on ? '#5c7cd8' : '#626262'};
    color: #f4f4f4;
`
const OrderButtons = styled.div`
    display: flex;
    gap: 10px;
    padding: 0 7px 0 4px;
`
const FlatButton = styled.button`
    display: flex;
    flex: none;
    gap: 7px;
    align-items: center;
`
const TopCheck = styled.label`
    display: flex;
    margin-left: 17px;
    gap: 5px;
    align-items: center;
    font-size: 13px;
`
const CheckBox = styled.input`
    appearance: none;
    position: relative;
    flex: none;
    width: 14px;
    height: 14px;
    margin: 0;
    border: 1px solid ${p => p.$sel ? '#7ca0d8' : p.$dim ? '#484848' : '#767676'};
    background: ${p => p.$sel ? '#4c76c8' : p.$dim ? '#2e2c2c' : 'transparent'};
    &:checked::after {
        content: '';
        position: absolute;
        left: 4px;
        top: 1px;
        width: 4px;
        height: 8px;
        border: solid ${p => p.$sel ? '#8cd0f8' : p.$dim ? '#777' : '#f0f0f0'};
        border-width: 0 2px 2px 0;
        transform: rotate(40deg);
    }
`
const Main = styled.div`
    display: flex;
    flex: 1;
    min-height: 0;
    gap: 2px;
    padding: 4px 0 2px;
    background: ${RIBBON};
`
const LeftPanel = styled.div`
    display: flex;
    width: 340px;
    padding: 2px 1px 0 0;
    flex: none;
    flex-direction: column;
`
const PanelTitle = styled.div`
    display: flex;
    height: 22px;
    margin-bottom: 2px;
    padding-left: 5px;
    gap: 5px;
    align-items: center;
    background: #2d3541;
    border-radius: 0 4px 0 0;
`
const Filters = styled.div`
    display: flex;
    height: 49px;
    gap: 6px;
    padding: 0 5px;
    align-items: center;
    background: ${GREY};
`
const SelectBox = styled.div`
    display: flex;
    width: ${p => p.$w ? p.$w + 'px' : 'auto'};
    flex: ${p => p.$grow ? 1 : 'none'};
    min-width: 0;
    height: 28px;
    padding-right: 5px;
    align-items: center;
    background: #333;
    border: 1px solid #6c6c6c;
    select, input {
        appearance: none;
        flex: 1;
        width: 100%;
        min-width: 0;
        height: 24px;
        padding: 0 4px;
        border: 0;
        background: transparent;
        outline: none;
    }
    select { padding: 0 6px; }
    input::placeholder { color: #a8a8a8; opacity: 1; }
`
const CheckLabel = styled.label`
    display: flex;
    gap: 4px;
    align-items: center;
`
const Tree = styled.div`
    flex: 1;
    min-height: 0;
    overflow: hidden;
    background: #282828;
`
const TreeRow = styled.div`
    display: flex;
    position: relative;
    height: 32px;
    padding: 0 1px 0 ${p => p.$kind === 'child' ? 29 : 7}px;
    align-items: center;
    background: ${p => p.$on ? BLUE : 'transparent'};
    color: #f0f0f0;
    font-weight: ${p => p.$on ? 700 : 400};
    &::before {
        content: '';
        display: ${p => p.$end ? 'none' : 'block'};
        position: absolute;
        left: 9px;
        top: ${p => p.$first ? 18 : 0}px;
        bottom: ${p => p.$last ? 16 : 0}px;
        width: 1px;
        background: #777;
    }
`
const TreeText = styled.span`
    padding-top: 2px;
`
const Twist = styled.svg`
    position: relative;
    margin-right: 2px;
`
const Branch = styled.svg`
    align-self: flex-start;
    margin-right: 3px;
`
const IconSlot = styled.span`
    display: flex;
    width: 27px;
    padding-left: 5px;
    flex: none;
`
const ViewSwatch = styled.span`
    width: 14px;
    height: 14px;
    margin-left: 1px;
    background: linear-gradient(#9aa0a0, #d0d0d0);
`
const PanelFoot = styled.div`
    display: flex;
    height: 57px;
    margin-bottom: 3px;
    padding: 0 4px 2px;
    gap: 11px;
    align-items: center;
    background: ${GREY};
    border-top: 1px solid #7a7a7a;
`
const SplitButton = styled.div`
    display: flex;
    width: ${p => p.$w}px;
    height: 33px;
    border: 1px solid #5c5f5f;
    background: #4a4a4a;
    button {
        display: flex;
        gap: 7px;
        justify-content: center;
        align-items: center;
    }
    button:first-child { flex: 1; }
    button:last-child {
        width: 28px;
        border-left: 1px solid #5c5f5f;
    }
`
const Work = styled.div`
    display: flex;
    flex: 1;
    min-width: 0;
    flex-direction: column;
    gap: 2px;
`
const Viewport = styled.div`
    position: relative;
    flex: 1;
    min-height: 0;
    background: ${DARK};
    overflow: hidden;
`
const ViewHeader = styled.div`
    display: flex;
    padding: 5px 11px 0 3px;
    justify-content: space-between;
    align-items: center;
    font-family: "Liberation Sans", "Noto Sans CJK SC", sans-serif;
    font-size: 13px;
`
const Model = styled.svg`
    position: absolute;
    left: 348px;
    top: 296px;
    font-family: "Open Sans", sans-serif;
`
const CubeBox = styled.div`
    display: flex;
    position: absolute;
    right: 18px;
    top: 66px;
    width: 130px;
    flex-direction: column;
    align-items: center;
    gap: 17px;
`
const Wcs = styled.button`
    display: flex;
    width: 48px;
    height: 18px;
    gap: 5px;
    justify-content: center;
    align-items: center;
    border: 1px solid #8a8a96;
    border-radius: 3px;
    background: #a09fad;
    color: #55565e;
    font-family: "Liberation Sans", sans-serif;
    font-size: 10px;
    svg { color: #c8c8d0; }
`
const ViewInfo = styled.div`
    position: absolute;
    left: 0;
    right: 0;
    bottom: 9px;
    text-align: center;
    font: 700 18px/20px "Liberation Sans", "Noto Sans CJK SC", sans-serif;
    color: #fff;
`
const Command = styled.div`
    display: flex;
    flex: none;
    height: 58px;
`
const CommandGutter = styled.div`
    display: flex;
    width: 25px;
    padding-left: 4px;
    background: #2b323e;
`
const CommandBody = styled.div`
    display: flex;
    flex: 1;
    flex-direction: column;
`
const History = styled.div`
    flex: 1;
    padding: 4px 2px 0;
    background: #c6c8c7;
    border-bottom: 1px solid #222;
    color: #000;
    font: 12px/15px "Liberation Mono", "Noto Sans CJK SC", monospace;
`
const Han = styled.span`
    font-size: 13px;
`
const Prompt = styled.div`
    display: flex;
    height: 20px;
    padding-left: 4px;
    gap: 3px;
    align-items: center;
    background: #fff;
    color: #555;
    input {
        flex: 1;
        height: 18px;
        padding: 0 4px;
        border: 0;
        outline: none;
        color: #222;
        font-size: 13px;
        font-style: italic;
    }
    input::placeholder { color: #7c7c7c; opacity: 1; }
`
const BottomBar = styled.div`
    display: flex;
    flex: none;
    height: 21px;
    padding: 0 1px 0 11px;
    gap: 1px;
    overflow: hidden;
`
const LayoutTab = styled.button`
    width: ${p => p.$on ? 46 : 53}px;
    height: 17px;
    border-radius: 2px 2px 8px 8px;
    background: ${p => p.$on ? RIBBON : '#2b333e'};
    color: ${p => p.$on ? '#fff' : '#b0b4b8'};
    font-weight: ${p => p.$on ? 700 : 400};
`
const AddLayout = styled.button`
    display: flex;
    width: 21px;
    height: 16px;
    margin-left: 5px;
    justify-content: center;
    align-items: center;
    border-radius: 8px 4px 8px 4px;
    background: #2b333e;
`
const Coords = styled.div`
    width: 212px;
    height: 24px;
    padding-right: 6px;
    text-align: right;
    line-height: 24px;
    background: #363c4c;
    color: #b8bcc4;
`
const Slab = styled.button`
    width: 22px;
    height: 24px;
    background: #b0b4b4;
    color: #555;
`
const Cluster = styled.div`
    display: flex;
    height: 24px;
    padding: 0 ${p => p.$pad || 0}px;
    background: #363f4a;
`
const StatusButton = styled.button`
    display: flex;
    width: 24px;
    height: 24px;
    justify-content: center;
    align-items: center;
    background: ${p => p.$on ? '#5a8cc4' : 'transparent'};
`
const StatusMore = styled.button`
    display: flex;
    width: 16px;
    height: 24px;
    justify-content: center;
    align-items: center;
    color: #d8d8d8;
`
const ModelButton = styled.button`
    width: 32px;
    height: 24px;
    background: #363f4a;
    color: #fff;
`
const ScaleText = styled.button`
    display: flex;
    width: 74px;
    height: 24px;
    gap: 5px;
    justify-content: center;
    align-items: center;
    color: #e0e0e0;
`
const UnitSelect = styled.div`
    display: flex;
    width: 73px;
    height: 24px;
    padding: 0 4px 0 5px;
    align-items: center;
    color: #e0e0e0;
    select {
        appearance: none;
        flex: 1;
        height: 22px;
        border: 0;
        background: transparent;
        outline: none;
    }
`
